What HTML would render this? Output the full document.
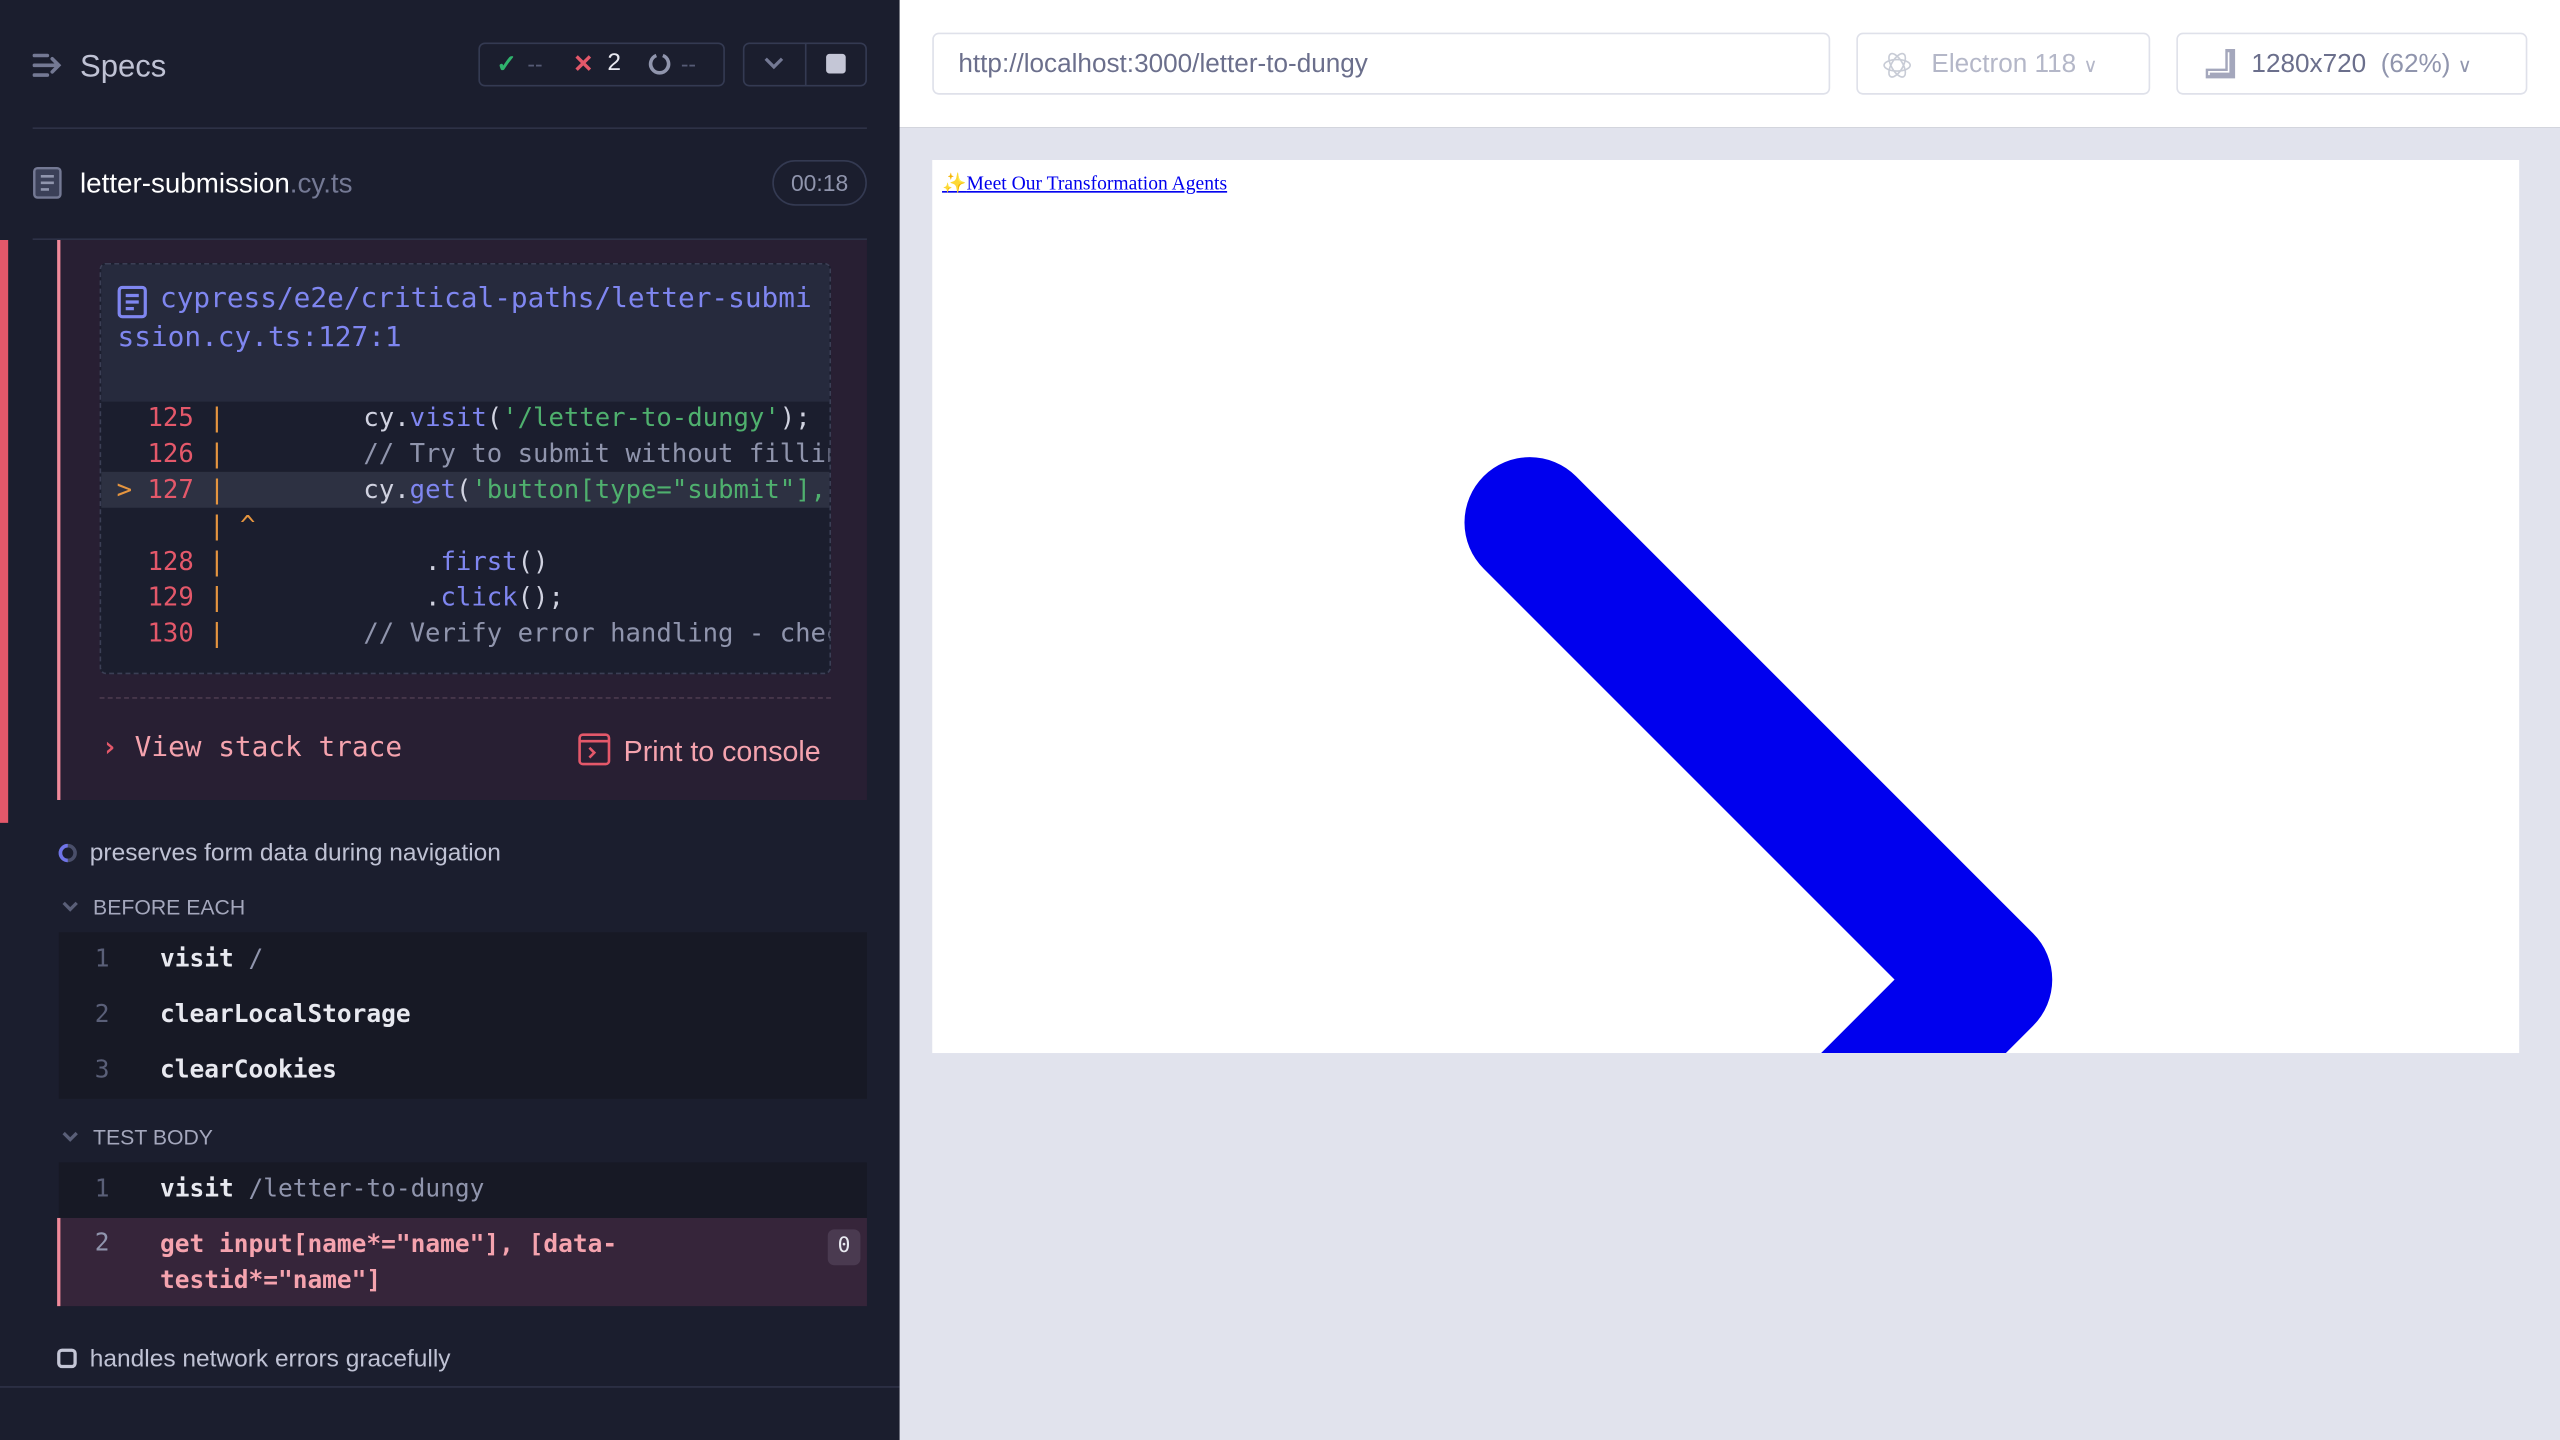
<!DOCTYPE html>
<html><head><meta charset="utf-8"><style>
*{margin:0;padding:0;box-sizing:border-box}
html,body{width:2560px;height:1440px;overflow:hidden;background:#1b1e2e}
#w{width:1568px;height:882px;transform:scale(1.632653);transform-origin:0 0;position:relative;font-family:"Liberation Sans",sans-serif}
.a{position:absolute}
.m{font-family:"DejaVu Sans Mono","Liberation Mono",monospace}
.cl{position:absolute;left:0;height:22px;width:447px;font-size:15.7px;line-height:22px;white-space:pre;overflow:hidden}
.n{color:#e4586a}.p{color:#e5953f}.b{color:#7f86f0}.g{color:#4fb06e}.w{color:#d0d2e0}.c{color:#9095ad}
</style></head><body><div id="w">
<div class="a" style="left:0;top:0;width:551px;height:882px;background:#1b1e2e"></div>
<svg class="a" style="left:20px;top:32px" width="19" height="16" viewBox="0 0 19 16"><g stroke="#747994" stroke-width="2.2" stroke-linecap="round" fill="none"><path d="M1 2h8M1 8h14M1 14h8M12 4l4 4-4 4"/></g></svg>
<div class="a" style="left:49px;top:31px;font-size:19px;color:#bfc2d4">Specs</div>
<div class="a" style="left:293px;top:26px;width:151px;height:27px;border:1px solid #343a52;border-radius:4px"></div>
<div class="a" style="left:304px;top:30px;font-size:15px;color:#2fb36d;font-weight:bold">✓</div>
<div class="a" style="left:323px;top:31px;font-size:14px;color:#565b75">--</div>
<div class="a" style="left:351px;top:30px;font-size:15px;color:#e4586a;font-weight:bold">✕</div>
<div class="a" style="left:372px;top:30px;font-size:15px;color:#e8e9f0">2</div>
<svg class="a" style="left:397px;top:32px" width="14" height="14" viewBox="0 0 14 14"><path d="M5 2A5.5 5.5 0 1 0 9 2" stroke="#9095ad" stroke-width="2.2" fill="none"/></svg>
<div class="a" style="left:417px;top:31px;font-size:14px;color:#565b75">--</div>
<div class="a" style="left:455px;top:26px;width:76px;height:27px;border:1px solid #343a52;border-radius:4px"></div>
<div class="a" style="left:493px;top:26px;width:1px;height:27px;background:#343a52"></div>
<svg class="a" style="left:467px;top:34px" width="14" height="9"><path d="M2 2l5 5 5-5" stroke="#747994" stroke-width="2" fill="none"/></svg>
<div class="a" style="left:506px;top:33px;width:12px;height:12px;background:#c4c6d6;border-radius:2px"></div>
<div class="a" style="left:20px;top:78px;width:511px;height:1px;background:#2e3247"></div>
<svg class="a" style="left:20px;top:102px" width="18" height="20" viewBox="0 0 18 20"><rect x="1" y="1" width="16" height="18" rx="2" fill="#3b4058" stroke="#747994" stroke-width="1.5"/><path d="M5 6h8M5 10h8M5 14h5" stroke="#9095ad" stroke-width="1.6"/></svg>
<div class="a" style="left:49px;top:103px;font-size:17px;color:#fff">letter-submission<span style="color:#747994">.cy.ts</span></div>
<div class="a" style="left:473px;top:98px;width:58px;height:28px;border:1px solid #343a52;border-radius:14px;font-size:14px;color:#9095ad;text-align:center;line-height:26px">00:18</div>
<div class="a" style="left:20px;top:146px;width:511px;height:1px;background:#2e3247"></div>
<div class="a" style="left:0;top:147px;width:5px;height:357px;background:#e4586a"></div>
<div class="a" style="left:35px;top:147px;width:496px;height:343px;background:#281f33;border-left:2px solid #f08a9a"></div>
<div class="a" style="left:61px;top:161px;width:448px;height:252px;border:1px dashed #3b3f55;border-radius:4px;background:#1b1e2e;overflow:hidden">
 <div class="a" style="left:0;top:0;width:448px;height:84px;background:#262a3d"></div>
 <svg class="a" style="left:10px;top:13px" width="18" height="20" viewBox="0 0 18 20"><rect x="1" y="1" width="16" height="18" rx="2" fill="none" stroke="#7f86f0" stroke-width="2"/><path d="M5 6h8M5 10h8M5 14h5" stroke="#7f86f0" stroke-width="2"/></svg>
 <div class="a m" style="left:10px;top:9px;width:432px;font-size:17px;line-height:24px;color:#7f86f0;word-break:break-all"><span style="padding-left:26px"></span>cypress/e2e/critical-paths/letter-submission.cy.ts:127:1</div>
 <div class="a" style="left:0;top:127px;width:448px;height:22px;background:#2d3142"></div>
 <div class="cl m" style="top:83px"><span class="n">   125</span><span class="p"> |</span><span class="w">         cy.</span><span class="b">visit</span><span class="w">(</span><span class="g">'/letter-to-dungy'</span><span class="w">);</span></div>
 <div class="cl m" style="top:105px"><span class="n">   126</span><span class="p"> |</span><span class="c">         // Try to submit without filling</span></div>
 <div class="cl m" style="top:127px"><span class="p"> &gt; </span><span class="n">127</span><span class="p"> |</span><span class="w">         cy.</span><span class="b">get</span><span class="w">(</span><span class="g">'button[type="submit"],</span></div>
 <div class="cl m" style="top:149px"><span class="p">       | ^</span></div>
 <div class="cl m" style="top:171px"><span class="n">   128</span><span class="p"> |</span><span class="w">             .</span><span class="b">first</span><span class="w">()</span></div>
 <div class="cl m" style="top:193px"><span class="n">   129</span><span class="p"> |</span><span class="w">             .</span><span class="b">click</span><span class="w">();</span></div>
 <div class="cl m" style="top:215px"><span class="n">   130</span><span class="p"> |</span><span class="c">         // Verify error handling - check</span></div>
</div>
<div class="a" style="left:61px;top:427px;width:448px;border-top:1px dashed #4a3a4e"></div>
<div class="a m" style="left:62px;top:448px;font-size:17px;color:#f5a3ae"><span style="color:#e4586a;font-weight:bold">›</span> View stack trace</div>
<svg class="a" style="left:354px;top:449px" width="20" height="20" viewBox="0 0 20 20"><rect x="1" y="1" width="18" height="18" rx="2" fill="none" stroke="#e4586a" stroke-width="1.6"/><path d="M1 5h18M7 9l3 3-3 3" stroke="#e4586a" stroke-width="1.6" fill="none"/></svg>
<div class="a" style="left:382px;top:450px;font-size:17.5px;color:#f5a3ae">Print to console</div>
<svg class="a" style="left:35px;top:516px" width="13" height="13"><circle cx="6.5" cy="6.5" r="4.5" stroke="#4a4f6a" stroke-width="2.2" fill="none"/><path d="M6.5 2A4.5 4.5 0 0 0 6.5 11" stroke="#6f74e8" stroke-width="2.2" fill="none"/></svg>
<div class="a" style="left:55px;top:514px;font-size:15px;color:#bfc2d4">preserves form data during navigation</div>
<svg class="a" style="left:37px;top:551px" width="12" height="8"><path d="M2 2l4 4 4-4" stroke="#5a5f78" stroke-width="2" fill="none"/></svg>
<div class="a" style="left:57px;top:548px;font-size:13px;color:#a4a7bc">BEFORE EACH</div>
<div class="a" style="left:36px;top:571px;width:495px;height:102px;background:#171925"></div>
<div class="a m" style="left:58px;top:578px;font-size:15px;color:#5a5f78">1</div><div class="a m" style="left:98px;top:578px;font-size:15px;color:#e8e9f0;font-weight:bold">visit <span style="color:#9095ad;font-weight:normal"> /</span></div>
<div class="a m" style="left:58px;top:612px;font-size:15px;color:#5a5f78">2</div><div class="a m" style="left:98px;top:612px;font-size:15px;color:#e8e9f0;font-weight:bold">clearLocalStorage</div>
<div class="a m" style="left:58px;top:646px;font-size:15px;color:#5a5f78">3</div><div class="a m" style="left:98px;top:646px;font-size:15px;color:#e8e9f0;font-weight:bold">clearCookies</div>
<svg class="a" style="left:37px;top:692px" width="12" height="8"><path d="M2 2l4 4 4-4" stroke="#5a5f78" stroke-width="2" fill="none"/></svg>
<div class="a" style="left:57px;top:689px;font-size:13px;color:#a4a7bc">TEST BODY</div>
<div class="a" style="left:36px;top:712px;width:495px;height:34px;background:#171925"></div>
<div class="a m" style="left:58px;top:719px;font-size:15px;color:#5a5f78">1</div><div class="a m" style="left:98px;top:719px;font-size:15px;color:#e8e9f0;font-weight:bold">visit <span style="color:#9095ad;font-weight:normal"> /letter-to-dungy</span></div>
<div class="a" style="left:35px;top:746px;width:496px;height:54px;background:#36253a;border-left:2px solid #f08a9a"></div>
<div class="a m" style="left:58px;top:752px;font-size:15px;color:#9095ad">2</div>
<div class="a m" style="left:98px;top:751px;width:300px;font-size:15px;line-height:22px;color:#f5a3ae;font-weight:bold">get  input[name*="name"], [data-testid*="name"]</div>
<div class="a m" style="left:507px;top:753px;width:20px;height:22px;background:#4a3a50;border-radius:4px;font-size:13px;color:#e8e9f0;text-align:center;line-height:22px">0</div>
<div class="a" style="left:35px;top:826px;width:12px;height:12px;border:2px solid #c4c6d6;border-radius:3px"></div>
<div class="a" style="left:55px;top:824px;font-size:15px;color:#bfc2d4">handles network errors gracefully</div>
<div class="a" style="left:0;top:849px;width:551px;height:1px;background:#2e3247"></div>
<div class="a" style="left:551px;top:0;width:1017px;height:78px;background:#fff"></div>
<div class="a" style="left:551px;top:78px;width:1017px;height:804px;background:#e1e3ed"></div>
<div class="a" style="left:571px;top:20px;width:550px;height:38px;border:1px solid #dfe1ea;border-radius:4px;font-size:16px;color:#6b6f8c;padding-left:15px;line-height:38px">http://localhost:3000/letter-to-dungy</div>
<div class="a" style="left:1137px;top:20px;width:180px;height:38px;border:1px solid #dfe1ea;border-radius:4px;font-size:16px;color:#b4b7c8;padding-left:45px;line-height:38px">Electron 118 <span style="font-size:12px">∨</span></div>
<svg class="a" style="left:1153px;top:30px" width="18" height="20" viewBox="0 0 18 20"><g stroke="#c8ccd6" fill="none" stroke-width="1"><ellipse cx="9" cy="10" rx="8" ry="3.5"/><ellipse cx="9" cy="10" rx="8" ry="3.5" transform="rotate(60 9 10)"/><ellipse cx="9" cy="10" rx="8" ry="3.5" transform="rotate(-60 9 10)"/></g></svg>
<div class="a" style="left:1333px;top:20px;width:215px;height:38px;border:1px solid #dfe1ea;border-radius:4px;font-size:16px;color:#6b6f8c;padding-left:45px;line-height:38px">1280x720 &nbsp;<span style="color:#9095ad">(62%)</span> <span style="font-size:12px;color:#9095ad">∨</span></div>
<svg class="a" style="left:1350px;top:29px" width="20" height="20" viewBox="0 0 20 20"><path d="M1 19V13h12V1h6v18z" fill="#a4a7bc"/><path d="M3 17v-2h12V3" stroke="#fff" stroke-width="1" fill="none"/></svg>
<div class="a" style="left:571px;top:98px;width:972px;height:547px;background:#fff;overflow:hidden">
 <div class="a" style="left:6px;top:7px;font-family:'Liberation Serif',serif;font-size:12px;color:#0000ee;text-decoration:underline"><span style="color:#f3c23c">✨</span>Meet Our Transformation Agents</div>
 <svg class="a" style="left:0;top:0" width="972" height="547"><path d="M366 222L646 502L530 618" stroke="#0000ee" stroke-width="80" stroke-linecap="round" stroke-linejoin="round" fill="none"/></svg>
</div>
</div></body></html>
